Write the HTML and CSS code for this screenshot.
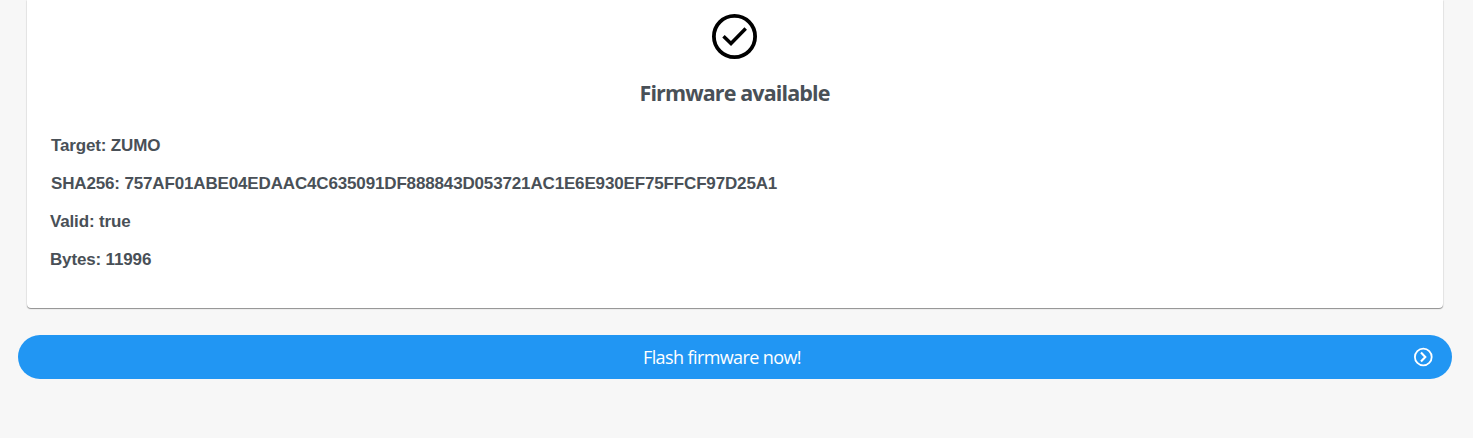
FILE: index.html
```html
<!DOCTYPE html>
<html lang="en">
<head>
<meta charset="utf-8">
<title>Firmware</title>
<link rel="stylesheet" href="styles.css">
</head>
<body>
<main class="page">
  <section class="card">
    <svg class="check" viewBox="0 0 46 46" fill="none" stroke="#000">
      <circle cx="22.5" cy="22.5" r="20.6" stroke-width="3.8"/>
      <path d="M11.5 22.3L19 29.5L33.7 14.6" stroke-width="3.5"/>
    </svg>
    <h1 class="title"><span class="title-text">Firmware available</span></h1>
    <div class="details">
      <p class="row indented">Target: ZUMO</p>
      <p class="row indented">SHA256: 757AF01ABE04EDAAC4C635091DF888843D053721AC1E6E930EF75FFCF97D25A1</p>
      <p class="row">Valid: true</p>
      <p class="row">Bytes: 11996</p>
    </div>
  </section>
  <button class="flash" type="button">
    <span class="flash-label">Flash firmware now!</span>
    <svg class="arrow" viewBox="0 0 20 20" fill="none" stroke="#fff">
      <circle cx="10.3" cy="10" r="8.4" stroke-width="1.8"/>
      <path d="M8 5.5L12.3 10L8 14.5" stroke-width="2.1"/>
    </svg>
  </button>
</main>
</body>
</html>
```
FILE: styles.css
```css
* { box-sizing: border-box; }
body {
  margin: 0;
  background: #f7f7f7;
  color: #495057;
  overflow: hidden;
}
.page {
  display: flex;
  flex-direction: column;
  gap: 27px;
  height: 438px;
  padding: 0 21px 0 18px;
}
.card {
  display: flex;
  flex-direction: column;
  align-items: center;
  height: 308px;
  margin: 0 9px;
  padding: 14px 24px 0 23px;
  background: #fff;
  border-radius: 0 0 4px 4px;
  box-shadow: 0 1px 1px rgba(0, 0, 0, .4), 0 0 2px rgba(0, 0, 0, .14);
}
.check { display: block; width: 46px; height: 46px; flex: none; }
.title {
  margin: 18px 0 0;
  font: 700 21.5px/30px "Open Sans", "Noto Sans", sans-serif;
  color: #495057;
  white-space: nowrap;
}
.title-text { letter-spacing: -.88px; }
.details { align-self: stretch; margin-top: 19px; }
.row {
  margin: 0;
  font: 700 17px/38px "Liberation Sans", Arial, sans-serif;
  letter-spacing: -.152px;
  white-space: nowrap;
}
.indented { padding-left: 1px; }
.flash {
  display: flex;
  align-items: center;
  height: 44px;
  padding: 0 19px 0 0;
  border: 0;
  border-radius: 22px;
  background: #2196f3;
  color: #fff;
  font: 400 18px/24px "Open Sans", "Noto Sans", sans-serif;
}
.flash-label { flex: 1; padding-left: 13px; text-align: center; letter-spacing: -.6px; }
.arrow { display: block; width: 20px; height: 20px; flex: none; }
```
